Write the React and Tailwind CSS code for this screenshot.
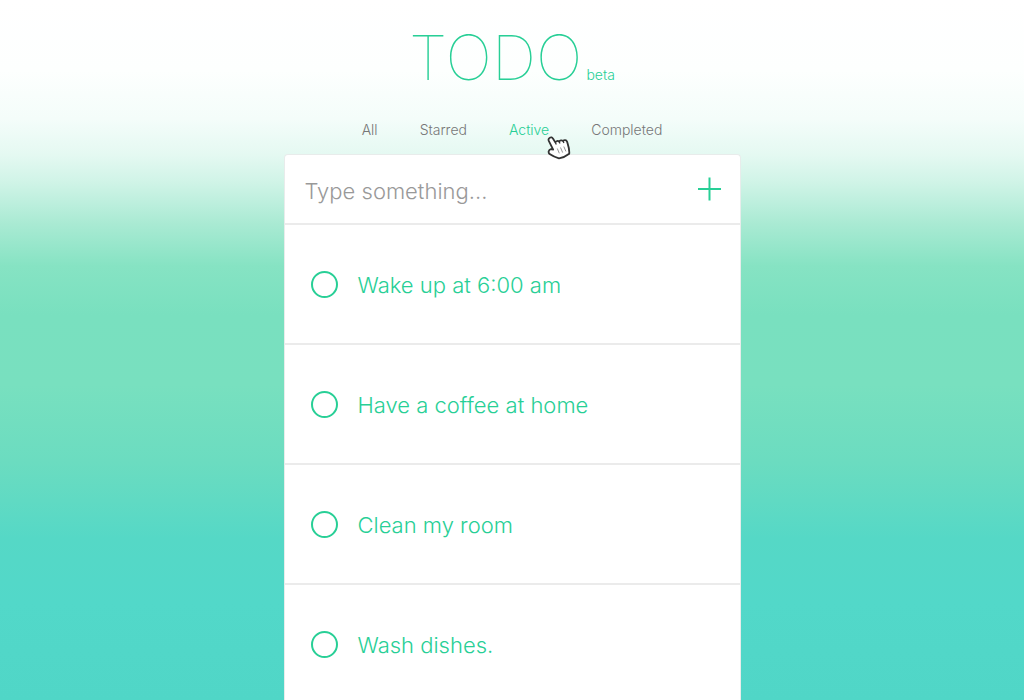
const tabs = ["All", "Starred", "Active", "Completed"];
const todos = ["Wake up at 6:00 am", "Have a coffee at home", "Clean my room", "Wash dishes."];

function HandCursor() {
  return (
    <svg
      className="pointer-events-none absolute top-full left-full -mt-1.5 -ml-0.5 h-6 w-6"
      viewBox="0 0 24 24"
      fill="none"
      aria-hidden="true"
    >
      <path
        d="M2.8 1.7C4 .9 5.3 1.3 6.1 2.8L8.3 6.4C9 5 10.9 4.5 12.1 5.5C13 4.2 14.9 3.8 16 5C17.2 3.7 19.3 3.9 20 5.6C21 9 22.8 12.8 22.2 17.8C19.2 20.2 15.8 21.8 12 22.3C8.8 21.4 5.3 20 2.6 18.1C.9 16.3 1.5 13.7 4 13.2L6.2 13.6L1.9 5.2C1.2 3.7 1.6 2.4 2.8 1.7Z"
        fill="#fff"
        stroke="#333"
        strokeWidth="1.8"
        strokeLinejoin="round"
      />
      <path d="M10.3 12.5L12.3 17.3M13.5 11.5L15.7 16.6M16.8 10.5L18.9 15.4" stroke="#777" strokeWidth="0.8" />
      <path d="M8.3 6.4L9.3 8.6M12.1 5.5L13 7.6M16 5L16.9 7" stroke="#333" strokeWidth="1.3" />
    </svg>
  );
}

function Todo({ id, text }) {
  return (
    <li className="border-t-2 border-[#ebebeb]">
      <label htmlFor={id} className="flex h-[118px] items-center gap-5 px-[26px] text-[22px] leading-7 text-[#28cf96]">
        <input
          id={id}
          type="checkbox"
          className="size-[27px] shrink-0 appearance-none rounded-full border-2 border-[#28cf96] checked:bg-[#28cf96]"
        />
        <span className="pt-0.5">{text}</span>
      </label>
    </li>
  );
}

export default function App() {
  return (
    <div className="h-screen overflow-y-auto bg-[linear-gradient(180deg,#ffffff_0%,#fdfffe_10%,#f4fdfa_17%,#e5f9f2_22%,#d0f4e7_26%,#a9ead3_32%,#86e3c3_38%,#79e0bf_45%,#78e0bf_55%,#6bdcc0_66%,#55d8c6_77%,#52d8c9_86%,#50d6c7_100%)] font-['Inter',sans-serif] font-light [scrollbar-width:none]">
      <div className="mx-auto flex min-h-full w-full max-w-[457px] flex-col">
        <header className="flex flex-col items-center pt-5 text-[#28cf96]">
          <h1 className="flex items-baseline gap-1 text-[62px] leading-[75px] font-thin">
            TODO<small className="text-sm font-light">beta</small>
          </h1>
          <nav className="mt-[23px] flex gap-[42px] text-sm leading-6">
            {tabs.map((tab) => (
              <a
                key={tab}
                href={"#" + tab.toLowerCase()}
                aria-current={tab === "Active" ? "page" : undefined}
                className="relative text-[#777777] aria-[current=page]:text-[#28cf96]"
              >
                {tab}
                {tab === "Active" && <HandCursor />}
              </a>
            ))}
          </nav>
        </header>
        <main className="mt-3 flex-1 rounded-t-sm border border-b-0 border-[#e8eceb] bg-white">
          <form className="flex h-[68px] items-center pr-[19px] pl-5" onSubmit={(e) => e.preventDefault()}>
            <input
              aria-label="New task"
              placeholder="Type something..."
              className="min-w-0 flex-1 pt-1 text-[22px] leading-7 text-[#28cf96] outline-none placeholder:text-[#999999]"
            />
            <button type="submit" aria-label="Add task" className="text-[#28cf96]">
              <svg className="block size-6" viewBox="0 0 24 24" stroke="currentColor" strokeWidth="2" aria-hidden="true">
                <path d="M1 12H24M12.5 0.5V23.5" />
              </svg>
            </button>
          </form>
          <ul>
            {todos.map((text, i) => (
              <Todo key={text} id={"todo-" + i} text={text} />
            ))}
          </ul>
        </main>
      </div>
    </div>
  );
}
